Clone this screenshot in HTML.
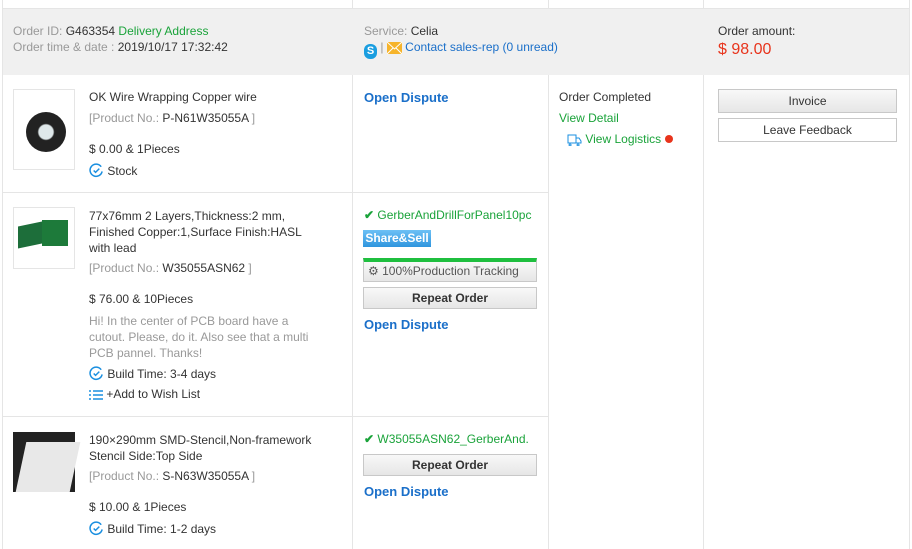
<!DOCTYPE html>
<html><head><meta charset="utf-8"><style>
*{margin:0;padding:0;box-sizing:border-box}
body{width:912px;height:549px;overflow:hidden;background:#fff;font-family:"Liberation Sans",Arial,sans-serif;font-size:12px;color:#333;position:relative}
.a{position:absolute;white-space:nowrap}
.vl{position:absolute;width:1px;background:#e5e5e5}
.hl{position:absolute;height:1px;background:#e5e5e5}
.g{color:#999}.gr{color:#1aa33a}.bl{color:#1a6fc9}
.od{color:#1a6fc9;font-weight:bold;font-size:13px}
.btn{position:absolute;border:1px solid #c8c8c8;background:linear-gradient(#f8f8f8,#e6e6e6);text-align:center;font-size:12px;color:#333}
.thumb{position:absolute;left:13px;width:62px;border:1px solid #e5e5e5;background:#fff}
svg{vertical-align:-3px}
</style></head><body>
<div class="vl" style="left:352px;top:0;height:8px"></div>
<div class="vl" style="left:548px;top:0;height:8px"></div>
<div class="vl" style="left:703px;top:0;height:8px"></div>
<div style="position:absolute;left:2px;top:8px;width:907px;height:67px;background:#f0f0f0;border-top:1px solid #e5e5e5"></div>
<div class="vl" style="left:2px;top:0;height:549px"></div>
<div class="vl" style="left:909px;top:0;height:549px"></div>
<div class="a" style="left:13px;top:24px"><span class="g">Order ID: </span>G463354 <span class="gr">Delivery Address</span></div>
<div class="a" style="left:13px;top:40px"><span class="g">Order time &amp; date : </span>2019/10/17 17:32:42</div>
<div class="a" style="left:364px;top:24px"><span class="g">Service: </span>Celia</div>
<div class="a" style="left:364px;top:40px"><span style="display:inline-block;width:13px;height:15px;border-radius:6px;background:#1a9ee0;color:#fff;font-size:11px;font-weight:bold;text-align:center;line-height:15px;vertical-align:-3px">S</span> <span class="g">|</span> <svg width="15" height="12" viewBox="0 0 15 12"><rect width="15" height="12" fill="#f6b42b"/><path d="M0 0L7.5 7L15 0M0 12L6 6M15 12L9 6" stroke="#fff" fill="none"/></svg> <span class="bl">Contact sales-rep (0 unread)</span></div>
<div class="a" style="left:718px;top:24px">Order amount:</div>
<div class="a" style="left:718px;top:41px;color:#e8341c;font-size:16px">$ 98.00</div>
<div class="vl" style="left:352px;top:75px;height:474px"></div>
<div class="vl" style="left:548px;top:75px;height:474px"></div>
<div class="vl" style="left:703px;top:75px;height:474px"></div>
<div class="hl" style="left:2px;top:192px;width:546px"></div>
<div class="hl" style="left:2px;top:416px;width:546px"></div>
<!-- row1 -->
<div class="thumb" style="top:89px;height:81px"><div style="position:absolute;left:12px;top:22px;width:40px;height:40px;border-radius:50%;background:radial-gradient(#dfe8ea 25%,#222 30%)"></div></div>
<div class="a" style="left:89px;top:90px">OK Wire Wrapping Copper wire</div>
<div class="a" style="left:89px;top:111px"><span class="g">[Product No.: </span>P-N61W35055A<span class="g"> ]</span></div>
<div class="a" style="left:89px;top:142px">$ 0.00 &amp; 1Pieces</div>
<div class="a" style="left:89px;top:163px"><svg width="15" height="15" viewBox="0 0 16 16"><path d="M13 4A6.5 6.5 0 1 0 14 9" stroke="#1a8fe0" stroke-width="1.6" fill="none"/><path d="M5 8l2 2 4-4" stroke="#1a8fe0" stroke-width="1.6" fill="none"/></svg> Stock</div>
<div class="a od" style="left:364px;top:90px">Open Dispute</div>
<div class="a" style="left:559px;top:90px">Order Completed</div>
<div class="a gr" style="left:559px;top:111px">View Detail</div>
<div class="a" style="left:567px;top:132px"><svg width="15" height="13" viewBox="0 0 15 13"><path d="M1 2h8v8H1zM9 5h3l2 3v2H9M3 11a1 1 0 1 0 .1 0M11 11a1 1 0 1 0 .1 0" stroke="#1a8fe0" fill="none"/></svg> <span class="gr">View Logistics</span> <span style="display:inline-block;width:8px;height:8px;border-radius:50%;background:#e8341c"></span></div>
<div class="btn" style="left:718px;top:89px;width:179px;height:24px;line-height:22px">Invoice</div>
<div class="btn" style="left:718px;top:118px;width:179px;height:24px;line-height:22px;background:#fff">Leave Feedback</div>
<!-- row2 -->
<div class="thumb" style="top:207px;height:62px;background:#fff"><div style="position:absolute;left:4px;top:16px;width:24px;height:22px;background:#1d6e3a;transform:skewY(-12deg)"></div><div style="position:absolute;left:28px;top:12px;width:26px;height:26px;background:#1d7a3a"></div></div>
<div class="a" style="left:89px;top:208px;line-height:16px">77x76mm 2 Layers,Thickness:2 mm,<br>Finished Copper:1,Surface Finish:HASL<br>with lead</div>
<div class="a" style="left:89px;top:261px"><span class="g">[Product No.: </span>W35055ASN62<span class="g"> ]</span></div>
<div class="a" style="left:89px;top:292px">$ 76.00 &amp; 10Pieces</div>
<div class="a g" style="left:89px;top:313px;line-height:16px">Hi! In the center of PCB board have a<br>cutout. Please, do it. Also see that a multi<br>PCB pannel. Thanks!</div>
<div class="a" style="left:89px;top:366px"><svg width="15" height="15" viewBox="0 0 16 16"><path d="M13 4A6.5 6.5 0 1 0 14 9" stroke="#1a8fe0" stroke-width="1.6" fill="none"/><path d="M5 8l2 2 4-4" stroke="#1a8fe0" stroke-width="1.6" fill="none"/></svg> Build Time: 3-4 days</div>
<div class="a" style="left:89px;top:387px"><svg width="14" height="12" viewBox="0 0 14 12"><path d="M0 2h2M4 2h10M0 6h2M4 6h10M0 10h2M4 10h10" stroke="#1a8fe0" stroke-width="1.6"/></svg> +Add to Wish List</div>
<div class="a gr" style="left:364px;top:208px"><b>✔</b> GerberAndDrillForPanel10pc</div>
<div class="a" style="left:363px;top:230px;width:68px;height:17px;background:linear-gradient(#6cc0f5,#2f95de);color:#fff;font-weight:bold;font-size:12px;text-align:center;line-height:17px">Share&amp;Sell</div>
<div class="btn" style="left:363px;top:258px;width:174px;height:24px;border-top:4px solid #1fbf3f;line-height:18px;text-align:left;padding-left:4px;color:#555">⚙ 100%Production Tracking</div>
<div class="btn" style="left:363px;top:287px;width:174px;height:22px;line-height:20px;font-weight:bold">Repeat Order</div>
<div class="a od" style="left:364px;top:317px">Open Dispute</div>
<!-- row3 -->
<div class="thumb" style="top:432px;height:60px;background:#222;border:none"><div style="position:absolute;left:8px;top:10px;width:54px;height:50px;background:#e8e8e8;transform:skewX(-12deg)"></div></div>
<div class="a" style="left:89px;top:432px;line-height:16px">190×290mm SMD-Stencil,Non-framework<br>Stencil Side:Top Side</div>
<div class="a" style="left:89px;top:469px"><span class="g">[Product No.: </span>S-N63W35055A<span class="g"> ]</span></div>
<div class="a" style="left:89px;top:500px">$ 10.00 &amp; 1Pieces</div>
<div class="a" style="left:89px;top:521px"><svg width="15" height="15" viewBox="0 0 16 16"><path d="M13 4A6.5 6.5 0 1 0 14 9" stroke="#1a8fe0" stroke-width="1.6" fill="none"/><path d="M5 8l2 2 4-4" stroke="#1a8fe0" stroke-width="1.6" fill="none"/></svg> Build Time: 1-2 days</div>
<div class="a gr" style="left:364px;top:432px"><b>✔</b> W35055ASN62_GerberAnd.</div>
<div class="btn" style="left:363px;top:454px;width:174px;height:22px;line-height:20px;font-weight:bold">Repeat Order</div>
<div class="a od" style="left:364px;top:484px">Open Dispute</div>
</body></html>
